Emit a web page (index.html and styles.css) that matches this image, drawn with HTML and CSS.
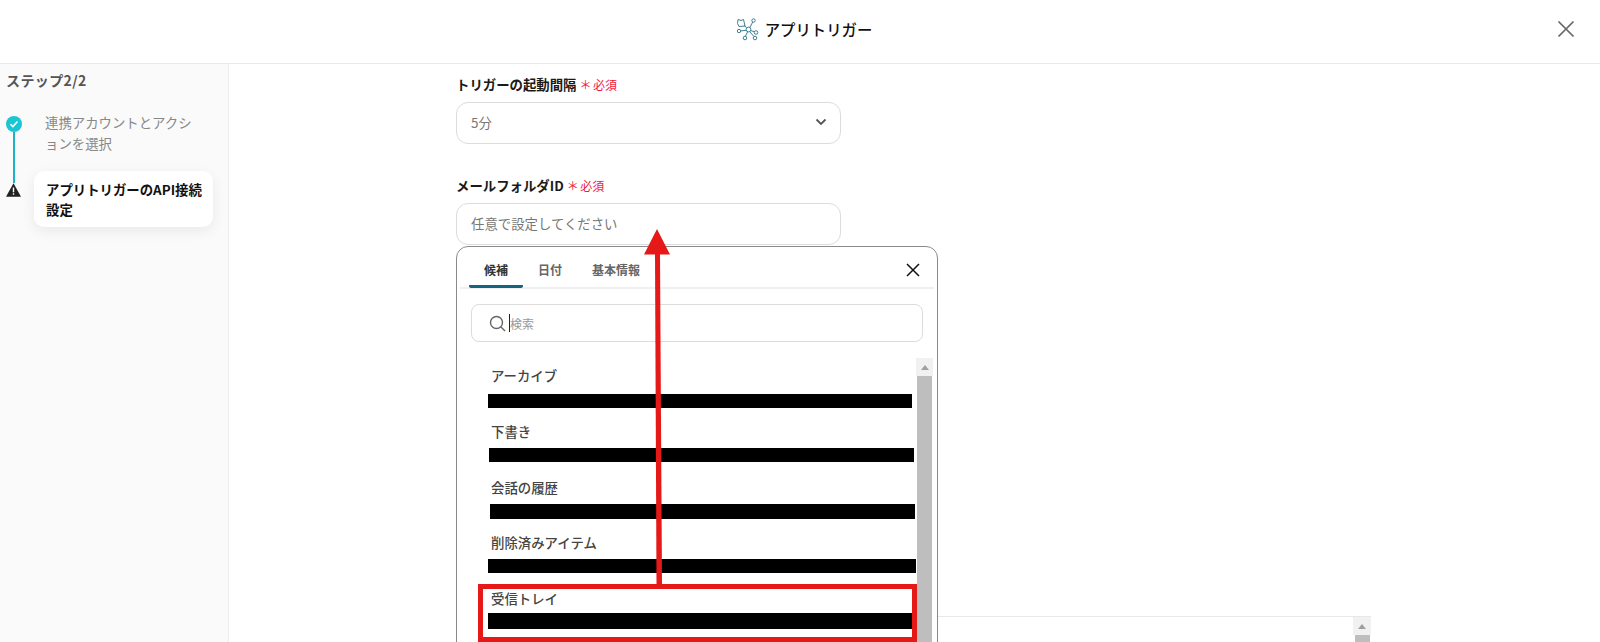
FILE: index.html
```html
<!DOCTYPE html>
<html lang="ja">
<head>
<meta charset="utf-8">
<title>アプリトリガー</title>
<link rel="stylesheet" href="styles.css">
</head>
<body>
<header class="topbar">
  <div class="title">
    <svg class="title-icon" width="24" height="24" viewBox="0 0 24 24" fill="none" stroke="#3f8095" stroke-width="1">
      <path d="M3 2.500l3 1 2.500-1 1.500 6.500-6 .5-1.500-3z"/>
      <path d="M9 8l4.500 5 5-9.500M13.500 13l7 2M13.500 13l-3.500 7M13.500 13l-8.500 1"/>
      <circle cx="13.500" cy="12.500" r="2.400" fill="#fff"/>
      <circle cx="18.500" cy="3.500" r="1.700" fill="#fff"/>
      <circle cx="21" cy="15.500" r="1.800" fill="#fff"/>
      <circle cx="20" cy="21" r="1.800" fill="#fff"/>
      <path d="M14.500 14.500l4.500 5"/>
      <circle cx="10" cy="21" r="1.800" fill="#fff"/>
      <circle cx="4" cy="14" r="1.700" fill="#fff"/>
    </svg>
    <span>アプリトリガー</span>
  </div>
  <button class="close-main" aria-label="閉じる">
    <svg width="18" height="18" viewBox="0 0 18 18" stroke="#666" stroke-width="1.700" fill="none"><path d="M1.500 1.500l15 15M16.500 1.500l-15 15"/></svg>
  </button>
</header>
<div class="body">
  <aside class="sidebar">
    <h2 class="step-heading">ステップ2/2</h2>
    <ol class="steps">
      <li class="step step-done">
        <div class="rail">
          <span class="check">
            <svg width="10" height="10" viewBox="0 0 10 10" fill="none" stroke="#fff" stroke-width="1.500"><path d="M1.500 5.300l2.400 2.300 4.600-5"/></svg>
          </span>
          <span class="rail-line"></span>
        </div>
        <div class="step-text">連携アカウントとアクションを選択</div>
      </li>
      <li class="step step-current">
        <div class="rail">
          <span class="rail-line"></span>
          <svg class="warn" width="15" height="14" viewBox="0 0 15 14"><path d="M7.500.3L15 13.700H0z" fill="#222"/><path d="M7.500 4.600v4.600M7.500 10.200v1.600" stroke="#fff" stroke-width="1.400"/></svg>
        </div>
        <div class="step-card">アプリトリガーのAPI接続設定</div>
      </li>
    </ol>
  </aside>
  <main class="main">
    <div class="form">
      <label class="label">トリガーの起動間隔<span class="req">＊ 必須</span></label>
      <div class="field field-select">
        <span>5分</span>
        <svg width="12" height="8" viewBox="0 0 12 8" fill="none" stroke="#555" stroke-width="1.800"><path d="M1.500 1.500L6 6l4.500-4.500"/></svg>
      </div>
      <label class="label label-gap">メールフォルダID<span class="req">＊ 必須</span></label>
      <div class="field">任意で設定してください</div>
      <div class="textarea">
        <div class="scroll scroll-bg"><span class="scroll-btn"><i class="up"></i></span><span class="scroll-thumb"></span></div>
      </div>

      <section class="popover">
        <div class="tabs">
          <span class="tab tab-active">候補</span>
          <span class="tab">日付</span>
          <span class="tab">基本情報</span>
          <svg class="pop-close" width="14" height="14" viewBox="0 0 14 14" fill="none" stroke="#111" stroke-width="1.500"><path d="M1 1l12 12M13 1L1 13"/></svg>
        </div>
        <div class="search">
          <svg width="17" height="17" viewBox="0 0 17 17" fill="none" stroke="#666" stroke-width="1.400"><circle cx="7.500" cy="7.500" r="6"/><path d="M12 12l4 4"/></svg>
          <span class="caret"></span>
          <span class="search-ph">検索</span>
        </div>
        <div class="list">
          <div class="item">アーカイブ</div>
          <div class="item">下書き</div>
          <div class="item">会話の履歴</div>
          <div class="item">削除済みアイテム</div>
          <div class="item">受信トレイ</div>
          <span class="redact r1"></span>
          <span class="redact r2"></span>
          <span class="redact r3"></span>
          <span class="redact r4"></span>
          <span class="redact r5"></span>
          <div class="scroll scroll-list"><span class="scroll-btn"><i class="up"></i></span><span class="scroll-thumb"></span></div>
          <span class="highlight"></span>
        </div>
      </section>

      <svg class="arrow" width="28" height="356" viewBox="0 0 28 356">
        <path d="M14 0L27 25.500H1z" fill="#e61919"/>
        <path d="M12 25h5l2 330h-5.500z" fill="#e61919"/>
      </svg>
    </div>
  </main>
</div>
</body>
</html>
```
FILE: styles.css
```css
* { box-sizing: border-box; }
html, body { margin: 0; height: 642px; overflow: hidden; background: #fff; }
body {
  font-family: "Noto Sans CJK JP", "Noto Sans", sans-serif;
  color: #222;
}
.topbar {
  height: 64px;
  border-bottom: 1px solid #e8e8e8;
  display: flex;
  align-items: center;
  justify-content: center;
  position: relative;
}
.title {
  display: flex;
  align-items: center;
  gap: 6px;
  font-size: 15.400px;
  font-weight: 500;
  color: #111;
  margin-left: 7px;
  margin-top: -6px;
}
.close-main {
  position: absolute;
  right: 25px;
  top: 20px;
  padding: 0;
  border: 0;
  background: none;
  display: flex;
}
.body { display: flex; height: 578px; overflow: hidden; }
.sidebar {
  width: 229px;
  flex: none;
  background: #fafafa;
  border-right: 1px solid #ececec;
  padding: 6px 15px 0 6px;
}
.step-heading {
  margin: 0;
  font-size: 14px;
  line-height: 20px;
  font-weight: 700;
  color: #555;
  letter-spacing: .4px;
}
.steps { list-style: none; margin: 26px 0 0; padding: 0; }
.step { display: flex; }
.step-done { height: 55px; }
.step-current { height: 56px; }
.rail {
  width: 15px;
  flex: none;
  display: flex;
  flex-direction: column;
  align-items: center;
}
.check {
  width: 16px;
  height: 16px;
  flex: none;
  border-radius: 50%;
  background: #1cc5d3;
  display: flex;
  align-items: center;
  justify-content: center;
}
.rail-line { width: 2px; flex: 1; background: #1ab5c4; }
.step-current .rail-line { flex: none; height: 12px; }
.warn { flex: none; }
.step-text {
  margin-left: 24px;
  margin-top: -4px;
  font-size: 13.400px;
  line-height: 21px;
  color: #888;
  width: 150px;
}
.step-card {
  margin-left: 13px;
  width: 179px;
  height: 56px;
  padding: 8px 6px 8px 12px;
  background: #fff;
  border-radius: 10px;
  box-shadow: 0 4px 14px rgba(0,0,0,.07);
  font-size: 13.400px;
  line-height: 20px;
  font-weight: 700;
  color: #111;
}
.main { flex: 1; padding: 11px 0 0 227px; min-width: 0; }
.form { position: relative; width: 915px; }
.label {
  display: block;
  font-size: 13.400px;
  line-height: 18px;
  font-weight: 700;
  color: #1a1a1a;
  margin-bottom: 9px;
}
.label-gap { margin-top: 32px; }
.req {
  color: #f0193c;
  font-size: 12px;
  line-height: 1;
  font-weight: 400;
  margin-left: 4px;
  font-feature-settings: "palt";
}
.field {
  width: 385px;
  height: 42px;
  border: 1px solid #dcdcdc;
  border-radius: 12px;
  padding: 0 14px 3px;
  display: flex;
  align-items: center;
  justify-content: space-between;
  font-size: 13.400px;
  color: #777;
}
.field-select { padding-right: 13px; }
.textarea {
  margin-top: 371px;
  height: 60px;
  border-top: 1px solid #e8e8e8;
  position: relative;
}
.popover {
  position: absolute;
  left: 0;
  top: 171px;
  width: 482px;
  height: 420px;
  background: #fff;
  border: 1px solid #8a8a8a;
  border-radius: 12px 12px 0 0;
  padding: 0 3px;
}
.tabs {
  height: 42px;
  display: flex;
  align-items: stretch;
  padding-left: 9px;
  border-bottom: 2px solid #f0f0f0;
  position: relative;
}
.tab {
  padding: 0 15px;
  font-size: 12px;
  font-weight: 700;
  line-height: 45px;
  color: #666;
  height: 41px;
}
.tab-active { color: #333; border-bottom: 3px solid #13657f; border-radius: 2px; }
.pop-close { position: absolute; right: 14px; top: 16px; }
.search {
  margin: 15px 11px 0 11px;
  height: 38px;
  border: 1px solid #dcdcdc;
  border-radius: 8px;
  display: flex;
  align-items: center;
  padding-left: 17px;
}
.caret { width: 1px; height: 18px; background: #222; margin-left: 3px; }
.search-ph { font-size: 12px; color: #999; margin-left: 0; }
.list {
  margin: 16px 0 0;
  position: relative;
  padding: 7px 0 0 31px;
}
.item {
  height: 55.800px;
  font-size: 13.400px;
  line-height: 21px;
  font-weight: 500;
  color: #444;
}
.redact { position: absolute; background: #000; }
.r1 { left: 28px; width: 424px; top: 36px; height: 14px; }
.r2 { left: 28.500px; width: 425px; top: 90px; height: 14px; }
.r3 { left: 30px; width: 425px; top: 146px; height: 15px; }
.r4 { left: 28px; width: 428px; top: 201px; height: 14px; }
.r5 { left: 28px; width: 425px; top: 255px; height: 16px; }
.scroll { position: absolute; display: flex; flex-direction: column; align-items: center; width: 17px; }
.scroll-list { right: 1px; top: 0; height: 300px; }
.scroll-bg { right: 0; top: 0; height: 60px; width: 18px; }
.scroll-btn { height: 18px; width: 100%; background: #f1f1f1; display: flex; justify-content: center; align-items: center; flex: none; }
.scroll-thumb { width: 15px; flex: 1; background: #bebebe; }
.up { width: 0; height: 0; border: 4px solid transparent; border-top: 0; border-bottom: 5px solid #a0a0a0; }
.highlight {
  position: absolute;
  left: 18px;
  top: 226px;
  width: 439px;
  height: 58px;
  border: 5px solid #e61919;
}
.arrow { position: absolute; left: 187px; top: 154px; }
```
